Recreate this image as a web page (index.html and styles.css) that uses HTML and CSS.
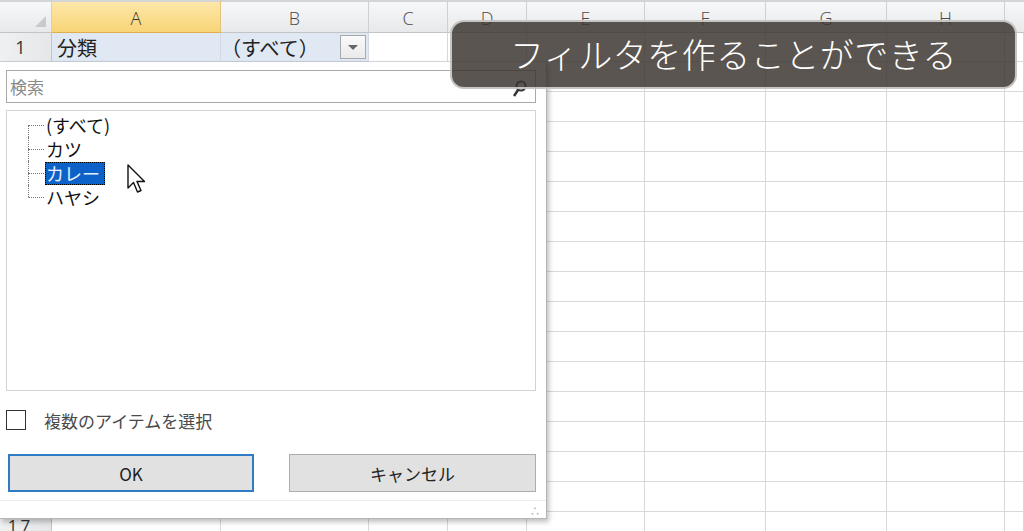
FILE: index.html
```html
<!DOCTYPE html>
<html lang="ja">
<head>
<meta charset="utf-8">
<title>フィルタ</title>
<link rel="stylesheet" href="styles.css">
</head>
<body>
<div class="sheet">
  <div class="ch corner"><span class="tri"></span></div>
  <div class="ch sel">A</div><div class="ch">B</div><div class="ch">C</div><div class="ch">D</div><div class="ch">E</div><div class="ch">F</div><div class="ch">G</div><div class="ch">H</div><div class="ch last"></div>

  <div class="rh">1</div>
  <div class="c hl big">分類</div>
  <div class="c hl big bcell"><span>（すべて）</span><span class="dd"><span class="ddtri"></span></span></div>
  <div class="c"></div><div class="c"></div><div class="c"></div><div class="c"></div><div class="c"></div><div class="c"></div><div class="c"></div>

  <div class="rh"></div><div class="c"></div><div class="c"></div><div class="c"></div><div class="c"></div><div class="c"></div><div class="c"></div><div class="c"></div><div class="c"></div><div class="c"></div>
  <div class="rh"></div><div class="c"></div><div class="c"></div><div class="c"></div><div class="c"></div><div class="c"></div><div class="c"></div><div class="c"></div><div class="c"></div><div class="c"></div>
  <div class="rh"></div><div class="c"></div><div class="c"></div><div class="c"></div><div class="c"></div><div class="c"></div><div class="c"></div><div class="c"></div><div class="c"></div><div class="c"></div>
  <div class="rh"></div><div class="c"></div><div class="c"></div><div class="c"></div><div class="c"></div><div class="c"></div><div class="c"></div><div class="c"></div><div class="c"></div><div class="c"></div>
  <div class="rh"></div><div class="c"></div><div class="c"></div><div class="c"></div><div class="c"></div><div class="c"></div><div class="c"></div><div class="c"></div><div class="c"></div><div class="c"></div>
  <div class="rh"></div><div class="c"></div><div class="c"></div><div class="c"></div><div class="c"></div><div class="c"></div><div class="c"></div><div class="c"></div><div class="c"></div><div class="c"></div>
  <div class="rh"></div><div class="c"></div><div class="c"></div><div class="c"></div><div class="c"></div><div class="c"></div><div class="c"></div><div class="c"></div><div class="c"></div><div class="c"></div>
  <div class="rh"></div><div class="c"></div><div class="c"></div><div class="c"></div><div class="c"></div><div class="c"></div><div class="c"></div><div class="c"></div><div class="c"></div><div class="c"></div>
  <div class="rh"></div><div class="c"></div><div class="c"></div><div class="c"></div><div class="c"></div><div class="c"></div><div class="c"></div><div class="c"></div><div class="c"></div><div class="c"></div>
  <div class="rh"></div><div class="c"></div><div class="c"></div><div class="c"></div><div class="c"></div><div class="c"></div><div class="c"></div><div class="c"></div><div class="c"></div><div class="c"></div>
  <div class="rh"></div><div class="c"></div><div class="c"></div><div class="c"></div><div class="c"></div><div class="c"></div><div class="c"></div><div class="c"></div><div class="c"></div><div class="c"></div>
  <div class="rh"></div><div class="c"></div><div class="c"></div><div class="c"></div><div class="c"></div><div class="c"></div><div class="c"></div><div class="c"></div><div class="c"></div><div class="c"></div>
  <div class="rh"></div><div class="c"></div><div class="c"></div><div class="c"></div><div class="c"></div><div class="c"></div><div class="c"></div><div class="c"></div><div class="c"></div><div class="c"></div>
  <div class="rh"></div><div class="c"></div><div class="c"></div><div class="c"></div><div class="c"></div><div class="c"></div><div class="c"></div><div class="c"></div><div class="c"></div><div class="c"></div>
  <div class="rh"></div><div class="c"></div><div class="c"></div><div class="c"></div><div class="c"></div><div class="c"></div><div class="c"></div><div class="c"></div><div class="c"></div><div class="c"></div>
  <div class="rh r17">17</div><div class="c"></div><div class="c"></div><div class="c"></div><div class="c"></div><div class="c"></div><div class="c"></div><div class="c"></div><div class="c"></div><div class="c"></div>
</div>

<div class="panel">
  <div class="search">
    <span class="ph">検索</span>
    <svg class="mag" width="14" height="18" viewBox="0 0 14 18"><circle cx="8" cy="6" r="4.5" fill="none" stroke="#333" stroke-width="2"/><line x1="5" y1="10" x2="1" y2="16" stroke="#333" stroke-width="2.5"/></svg>
  </div>
  <div class="list">
    <div class="tree">
      <div class="node first"><span class="stub"><span class="st"></span><span class="sb"></span></span><span class="lbl">(すべて)</span></div>
      <div class="node"><span class="stub"><span class="st"></span><span class="sb"></span></span><span class="lbl">カツ</span></div>
      <div class="node"><span class="stub"><span class="st"></span><span class="sb"></span></span><span class="lbl selected">カレー</span></div>
      <div class="node lastn"><span class="stub"><span class="st"></span><span class="sb"></span></span><span class="lbl">ハヤシ</span></div>
    </div>
  </div>
  <label class="check"><span class="box"></span><span class="ctext">複数のアイテムを選択</span></label>
  <div class="buttons">
    <button class="btn ok">OK</button>
    <button class="btn">キャンセル</button>
  </div>
  <div class="footer"><span class="grip">∴</span></div>
</div>

<svg class="cursor" width="22" height="32" viewBox="0 0 22 32"><path d="M1 1 L1 24 L6.5 18.5 L10.5 28 L14 26.5 L10 17.5 L17.5 17.5 Z" fill="#fff" stroke="#111" stroke-width="1.4" stroke-linejoin="round"/></svg>

<div class="banner">フィルタを作ることができる</div>
</body>
</html>
```

FILE: styles.css
```css
* { box-sizing: border-box; }
html, body { margin: 0; padding: 0; }
body {
  width: 1024px;
  height: 531px;
  overflow: hidden;
  background: #fff;
  font-family: "Noto Sans CJK JP", "Noto Sans", sans-serif;
  position: relative;
}
.sheet {
  display: grid;
  grid-template-columns: 52px 169px 148px 79px 79px 118px 121px 121px 118px 19px;
  grid-template-rows: 33px 29px repeat(15, 30px) 30px;
}
.ch {
  background: linear-gradient(#f7f8f9, #e8e9eb);
  border-top: 2px solid #d4d5d7;
  border-right: 1px solid #cfd0d2;
  border-bottom: 1px solid #c3c4c6;
  color: #4a4a4a;
  font-family: "Open Sans", "Noto Sans", sans-serif;
  font-weight: 300;
  font-size: 18px;
  display: flex;
  align-items: center;
  justify-content: center;
  padding-top: 2px;
}
.ch.sel {
  background: linear-gradient(#fde7a8, #f8d477);
  border-bottom: 1px solid #e2ad48;
  border-right: 1px solid #e3c37a;
  color: #333;
}
.ch.last { border-right: none; }
.corner { position: relative; }
.tri {
  position: absolute;
  right: 5px;
  bottom: 5px;
  width: 0; height: 0;
  border-left: 11px solid transparent;
  border-bottom: 11px solid #c9cacc;
}
.rh {
  background: linear-gradient(90deg, #eff0f1, #e6e7e9);
  border-right: 1px solid #c3c4c6;
  border-bottom: 1px solid #cfd0d2;
  color: #333;
  font-family: "Open Sans", "Noto Sans", sans-serif;
  font-size: 18px;
  display: flex;
  align-items: center;
  justify-content: center;
  padding-right: 10px;
}
.r17 { align-items: flex-start; padding-top: 2px; font-size: 17px; letter-spacing: 3px; }
.c {
  border-right: 1px solid #d9d9d9;
  border-bottom: 1px solid #d9d9d9;
}
.c.hl { background: #dfe8f3; border-bottom-color: #c6cdd6; border-right-color: #d3dae4; }
.big { font-size: 20px; color: #222; display: flex; align-items: center; padding-left: 5px; }
.bcell { justify-content: space-between; padding-left: 0; padding-right: 2px; }
.dd {
  width: 26px; height: 24px;
  border: 1px solid #a7a9ac;
  background: linear-gradient(#fafafa, #eaeaea);
  display: flex; align-items: center; justify-content: center;
}
.ddtri {
  width: 0; height: 0;
  border-left: 5px solid transparent;
  border-right: 5px solid transparent;
  border-top: 5px solid #666;
}

.panel {
  position: absolute;
  left: 0; top: 62px;
  width: 547px; height: 457px;
  background: #fff;
  border-right: 1px solid #b5b5b5;
  border-bottom: 1px solid #b5b5b5;
  box-shadow: 2px 3px 5px rgba(0,0,0,0.25);
  display: flex;
  flex-direction: column;
  padding: 8px 10px 0 6px;
}
.search {
  height: 33px;
  border: 1px solid #a9a9a9;
  display: flex;
  align-items: center;
  justify-content: space-between;
  padding: 0 8px 0 3px;
}
.ph { color: #8a8a8a; font-size: 17px; }
.mag { margin-top: 4px; }
.list {
  margin-top: 7px;
  height: 281px;
  border: 1px solid #d3d3d3;
  padding-left: 21px;
  padding-top: 2px;
}
.tree { display: flex; flex-direction: column; }
.node { display: flex; align-items: center; height: 24px; }
.stub { width: 16px; height: 24px; display: flex; flex-direction: column; flex: none; }
.st { height: 12px; border-left: 1px dotted #777; }
.sb { height: 12px; border-left: 1px dotted #777; border-top: 1px dotted #777; }
.first .st { border-left-color: transparent; }
.lastn .sb { border-left-color: transparent; }
.lbl { font-size: 18px; color: #111; padding: 0 1px; margin-left: 1px; line-height: 23px; }
.lbl.selected {
  background: #0c62c8;
  color: #e6f0ff;
  outline: 1px dotted #000;
  outline-offset: -1px;
  padding: 0 5px 0 1px;
}
.check {
  margin-top: 19px;
  display: flex;
  align-items: center;
  height: 20px;
}
.box {
  width: 20px; height: 20px;
  border: 1.5px solid #333;
  background: #fff;
  flex: none;
}
.ctext { margin-left: 18px; font-size: 17px; color: #4a4a4a; }
.buttons {
  margin-top: 24px;
  display: flex;
  justify-content: space-between;
  padding-left: 2px;
}
.btn {
  width: 247px;
  height: 38px;
  background: #e1e1e1;
  border: 1px solid #adadad;
  font-family: "Noto Sans CJK JP", "Noto Sans", sans-serif;
  font-size: 17px;
  color: #222;
  padding: 0;
}
.btn.ok { width: 246px; border: 2px solid #2f7bc4; }
.footer {
  margin-top: 8px;
  flex: 1;
  border-top: 1px solid #ececec;
  margin-left: -6px;
  margin-right: -10px;
  display: flex;
  justify-content: flex-end;
  align-items: flex-end;
  padding: 0 6px 2px 0;
}
.grip { font-size: 10px; color: #999; line-height: 10px; }

.cursor { position: absolute; left: 127px; top: 164px; }

.banner {
  position: absolute;
  left: 450px; top: 20px;
  width: 567px; height: 69px;
  border-radius: 14px;
  background: rgba(58, 52, 46, 0.84);
  border: 2px solid rgba(235, 235, 235, 0.75);
  color: #fff;
  font-size: 34px;
  font-weight: 300;
  display: flex;
  align-items: center;
  justify-content: center;
  padding-bottom: 2px;
  letter-spacing: 0.5px;
}
```
